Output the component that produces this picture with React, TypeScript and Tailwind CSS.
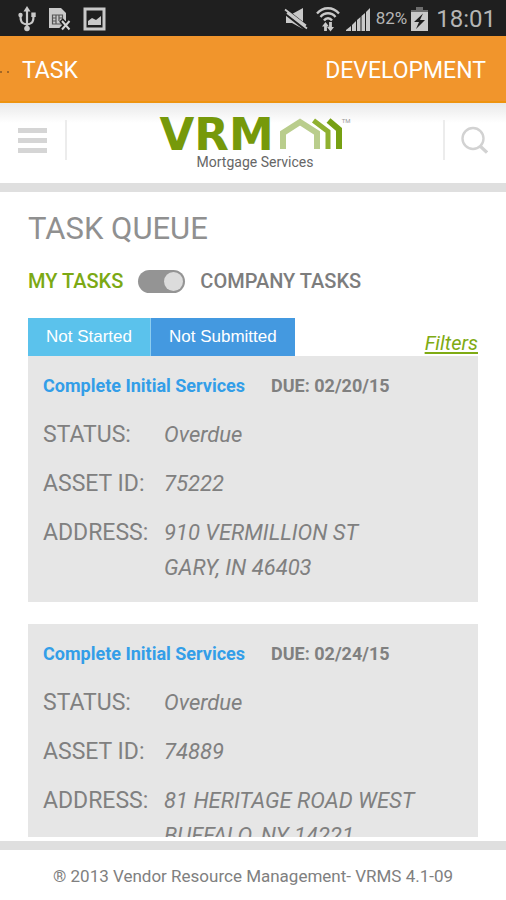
import React, { useState } from "react";

type Task = { id: string; title: string; due: string; status: string; address: string[] };

const tasks: Task[] = [
  {
    id: "75222",
    title: "Complete Initial Services",
    due: "02/20/15",
    status: "Overdue",
    address: ["910 VERMILLION ST", "GARY, IN 46403"],
  },
  {
    id: "74889",
    title: "Complete Initial Services",
    due: "02/24/15",
    status: "Overdue",
    address: ["81 HERITAGE ROAD WEST", "BUFFALO, NY 14221"],
  },
];

function UsbIcon() {
  return (
    <svg width="18" height="26" viewBox="0 0 18 26" fill="none" stroke="#c9c9c9" strokeWidth="2.2">
      <path d="M9 4v18M9 18.500C3 17.500 2.500 15 2.500 10M9 18.500c6-1 6.500-3.500 6.500-8.500" />
      <path d="M9 0l3.500 5.500h-7z" fill="#c9c9c9" stroke="none" />
      <circle cx="9" cy="22.500" r="2.800" fill="#c9c9c9" stroke="none" />
      <circle cx="2.500" cy="9" r="2.200" fill="#c9c9c9" stroke="none" />
      <path d="M13.300 6.500h4.400v4.400h-4.400z" fill="#c9c9c9" stroke="none" />
    </svg>
  );
}

function SimIcon() {
  return (
    <svg width="23" height="24" viewBox="0 0 23 24" fill="none">
      <path d="M1 1h12l5 5v15H1z" fill="#c9c9c9" />
      <path d="M4.500 8h10v9h-10zM4.500 11h4M4.500 14h4M11 11h3.500M8 8v9M11 8v6" stroke="#555" strokeWidth="1.200" />
      <path d="M13 13l9 10M22 13l-9 10" stroke="#1f1f1f" strokeWidth="5" />
      <path d="M14 14l7.500 8.500M21.500 14L14 22.500" stroke="#d5d5d5" strokeWidth="2" />
    </svg>
  );
}

function PictureIcon() {
  return (
    <svg width="23" height="24" viewBox="0 0 23 24">
      <path d="M2 2h19v20H2z" fill="none" stroke="#c9c9c9" strokeWidth="3" />
      <path d="M5 18v-4l4-3 4 2 5-4v9z" fill="#c9c9c9" />
    </svg>
  );
}

function MutedIcon() {
  return (
    <svg width="24" height="22" viewBox="0 0 24 22">
      <path d="M2 6h6l11-6v21L8 15H2z" fill="#c9c9c9" />
      <path d="M0 2.500l23 18" stroke="#1f1f1f" strokeWidth="6" />
      <path d="M1 1.500l21 16M3 5l20 15.500" stroke="#c9c9c9" strokeWidth="1.800" />
    </svg>
  );
}

function WifiIcon() {
  return (
    <svg width="24" height="25" viewBox="0 0 24 25" fill="none" stroke="#c9c9c9" strokeWidth="2.300">
      <path d="M1 6.500C7-.5 17-.5 23 6.500M4.500 10c4-5 11-5 15 0M8 13.500c2-3 6-3 8 0" />
      <path d="M9.500 24v-6M14.500 15v6" strokeWidth="2.800" />
      <path d="M6 19.500l3.500-4.500 3.500 4.500zM11 20l3.500 4.500L18 20z" fill="#c9c9c9" stroke="none" />
    </svg>
  );
}

function SignalIcon() {
  return (
    <svg width="24" height="23" viewBox="0 0 24 23" fill="#c9c9c9">
      <path d="M0 23v-1l5-4v5zM6 23v-6l4-4v10zM11 23V12l3.500-3v14zM15.500 23V8L19 5v18zM20 23V4l4-4v23z" />
    </svg>
  );
}

function BatteryIcon() {
  return (
    <svg width="17" height="25" viewBox="0 0 17 25">
      <path d="M5 0h7v3h5v3H0V3h5z" fill="#6d6d6d" />
      <path d="M0 5h17v19H0z" fill="#c9c9c9" />
      <path d="M12 6.500L3 15h5l-3 7 9-9H9z" fill="#1f1f1f" />
    </svg>
  );
}

function HouseMark() {
  return (
    <svg width="62" height="31" viewBox="0 0 62 31" fill="none" strokeWidth="6">
      <path d="M3 31V15L20 4l17 11v16" stroke="#b9cd8c" />
      <path d="M33.500 2.500L48 13.500V31" stroke="#8fb02f" strokeWidth="5" />
      <path d="M48.500 2.500L59 11.500V31" stroke="#76a012" />
    </svg>
  );
}

function StatusBar() {
  return (
    <div className="flex h-9 shrink-0 items-center justify-between bg-[#1f1f1f] pl-[18px] pr-2.5 pt-0.5 text-[#b5b5b5]">
      <div className="flex items-center gap-3">
        <UsbIcon />
        <SimIcon />
        <PictureIcon />
      </div>
      <div className="flex items-center">
        <MutedIcon />
        <span className="ml-2"><WifiIcon /></span>
        <span className="ml-1.5"><SignalIcon /></span>
        <span className="ml-1.5 text-[17px]">82%</span>
        <span className="ml-1"><BatteryIcon /></span>
        <span className="ml-2 text-2xl leading-8">18:01</span>
      </div>
    </div>
  );
}

function TaskCard({ task }: { task: Task }) {
  return (
    <article className="bg-[#e6e6e6] px-[15px] pb-[17px] pt-3 leading-[35px]">
      <div className="flex gap-[26px] text-[18px]">
        <h2 className="font-bold text-[#339ee8]">{task.title}</h2>
        <p className="font-bold text-[#808080]">DUE: {task.due}</p>
      </div>
      <dl className="mt-3.5 grid grid-cols-[105px_1fr] gap-x-4 gap-y-3.5 text-[22px] text-[#808080]">
        <dt className="text-[23px]">STATUS:</dt>
        <dd className="italic">{task.status}</dd>
        <dt className="text-[23px]">ASSET ID:</dt>
        <dd className="italic">{task.id}</dd>
        <dt className="text-[23px]">ADDRESS:</dt>
        <dd className="italic">
          {task.address.map((line) => (
            <span key={line} className="block">{line}</span>
          ))}
        </dd>
      </dl>
    </article>
  );
}

export default function App() {
  const [company, setCompany] = useState(true);
  return (
    <div className="flex h-screen flex-col overflow-hidden bg-white font-[Roboto,sans-serif]">
      <StatusBar />
      <div className="flex h-[67px] shrink-0 items-center justify-between border-b-2 border-[#ee930f] bg-[#f1952c] pr-5 pt-1.5 text-[23px] text-white">
        <div className="flex items-center">
          <svg width="22" height="4" viewBox="0 0 22 4" fill="#8a5a25">
            <circle cx="1" cy="2" r="1" />
            <circle cx="8" cy="2" r="1" />
          </svg>
          <h1>TASK</h1>
        </div>
        <span>DEVELOPMENT</span>
      </div>

      <header className="flex h-20 shrink-0 items-center justify-between bg-linear-to-b from-[#e9e9e9] to-white to-25% px-[18px] pb-1.5">
        <div className="flex items-center">
          <button aria-label="Menu" className="flex w-[29px] flex-col gap-[5px]">
            <span className="h-[5px] w-full bg-[#d5d5d5]" />
            <span className="h-[5px] w-full bg-[#d5d5d5]" />
            <span className="h-[5px] w-full bg-[#d5d5d5]" />
          </button>
          <span className="ml-[18px] h-10 w-0.5 bg-[#ececec]" />
        </div>
        <div className="flex flex-col items-center pt-1.5">
          <div className="flex items-start">
            <span className="font-['DejaVu_Sans',sans-serif] text-[45px] font-bold leading-[38px] text-[#76990a]">VRM</span>
            <span className="ml-1.5 pt-0.5"><HouseMark /></span>
            <span className="pt-0.5 text-[6px] leading-[6px] text-[#999999]">TM</span>
          </div>
          <span className="text-sm leading-4 text-[#666666]">Mortgage Services</span>
        </div>
        <div className="flex items-center">
          <span className="mr-4 h-10 w-0.5 bg-[#ececec]" />
          <button aria-label="Search">
            <svg width="27" height="28" viewBox="0 0 27 28" fill="none" stroke="#d2d2d2">
              <circle cx="12" cy="12.500" r="10.500" strokeWidth="2.400" />
              <path d="M19 20l7 6.500" strokeWidth="3.200" />
            </svg>
          </button>
        </div>
      </header>
      <div className="h-[9px] shrink-0 bg-[#dfdfdf]" />

      <main className="min-h-0 flex-1 overflow-y-auto px-7 pt-4 [scrollbar-width:none]">
        <h1 className="text-[31px] leading-[42px] text-[#909090]">TASK QUEUE</h1>
        <div className="mt-3.5 flex items-center gap-[15px] text-[20px] font-medium leading-[34px]">
          <label htmlFor="scope" className="text-[#7ca914]">MY TASKS</label>
          <input
            id="scope"
            type="checkbox"
            role="switch"
            checked={company}
            onChange={(e) => setCompany(e.target.checked)}
            className="flex h-[23px] w-[47px] appearance-none items-center rounded-full bg-[#949494] px-0.5 after:size-[19px] after:rounded-full after:bg-[#dcdcdc] checked:justify-end"
          />
          <label htmlFor="scope" className="text-[#7d7d7d]">COMPANY TASKS</label>
        </div>
        <div className="mt-5 flex items-end justify-between">
          <div className="flex font-['Liberation_Sans',sans-serif] text-[17px] leading-[38px] text-white">
            <button className="border-r border-[#8ccdf0] bg-[#5bc2ec] px-[18px]">Not Started</button>
            <button className="bg-[#4499e0] px-[18px]">Not Submitted</button>
          </div>
          <a href="#filters" className="text-[20px] italic leading-[26px] text-[#7fab14] underline underline-offset-2">Filters</a>
        </div>
        <div className="flex flex-col gap-[22px]">
          {tasks.map((t) => (
            <TaskCard key={t.id} task={t} />
          ))}
        </div>
      </main>

      <div className="mt-1 h-[9px] shrink-0 bg-[#dfdfdf]" />
      <footer className="shrink-0 pt-0.5 text-center text-[17px] leading-[48px] text-[#808080]">
        ® 2013 Vendor Resource Management- VRMS 4.1-09
      </footer>
    </div>
  );
}
